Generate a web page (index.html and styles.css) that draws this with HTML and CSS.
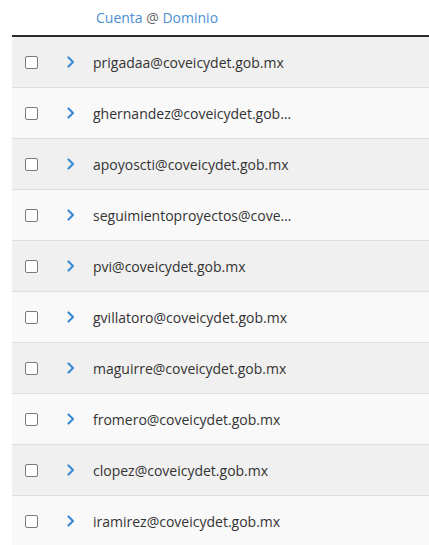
FILE: index.html
```html
<!DOCTYPE html>
<html lang="es">
  <head>
    <meta charset="UTF-8" />
    <meta name="viewport" content="width=device-width, initial-scale=1.0" />
    <title>Cuentas</title>
    <link rel="stylesheet" href="styles.css">
  </head>
  <body>
    <div class="accounts">
      <div class="accounts-head">
        <span class="head-check"></span>
        <span class="head-toggle"></span>
        <span class="head-title"><a href="#">Cuenta</a> @ <a href="#">Dominio</a></span>
      </div>
      <div class="account-row">
        <span class="check"></span>
        <svg class="chevron" viewBox="0 0 8 12"><path d="M1.5 1.5 L6 6 L1.5 10.5" /></svg>
        <span class="email">prigadaa@coveicydet.gob.mx</span>
      </div>
      <div class="account-row">
        <span class="check"></span>
        <svg class="chevron" viewBox="0 0 8 12"><path d="M1.5 1.5 L6 6 L1.5 10.5" /></svg>
        <span class="email">ghernandez@coveicydet.gob.mx</span>
      </div>
      <div class="account-row">
        <span class="check"></span>
        <svg class="chevron" viewBox="0 0 8 12"><path d="M1.5 1.5 L6 6 L1.5 10.5" /></svg>
        <span class="email">apoyoscti@coveicydet.gob.mx</span>
      </div>
      <div class="account-row">
        <span class="check"></span>
        <svg class="chevron" viewBox="0 0 8 12"><path d="M1.5 1.5 L6 6 L1.5 10.5" /></svg>
        <span class="email">seguimientoproyectos@coveicydet.gob.mx</span>
      </div>
      <div class="account-row">
        <span class="check"></span>
        <svg class="chevron" viewBox="0 0 8 12"><path d="M1.5 1.5 L6 6 L1.5 10.5" /></svg>
        <span class="email">pvi@coveicydet.gob.mx</span>
      </div>
      <div class="account-row">
        <span class="check"></span>
        <svg class="chevron" viewBox="0 0 8 12"><path d="M1.5 1.5 L6 6 L1.5 10.5" /></svg>
        <span class="email">gvillatoro@coveicydet.gob.mx</span>
      </div>
      <div class="account-row">
        <span class="check"></span>
        <svg class="chevron" viewBox="0 0 8 12"><path d="M1.5 1.5 L6 6 L1.5 10.5" /></svg>
        <span class="email">maguirre@coveicydet.gob.mx</span>
      </div>
      <div class="account-row">
        <span class="check"></span>
        <svg class="chevron" viewBox="0 0 8 12"><path d="M1.5 1.5 L6 6 L1.5 10.5" /></svg>
        <span class="email">fromero@coveicydet.gob.mx</span>
      </div>
      <div class="account-row">
        <span class="check"></span>
        <svg class="chevron" viewBox="0 0 8 12"><path d="M1.5 1.5 L6 6 L1.5 10.5" /></svg>
        <span class="email">clopez@coveicydet.gob.mx</span>
      </div>
      <div class="account-row">
        <span class="check"></span>
        <svg class="chevron" viewBox="0 0 8 12"><path d="M1.5 1.5 L6 6 L1.5 10.5" /></svg>
        <span class="email">iramirez@coveicydet.gob.mx</span>
      </div>
    </div>
  </body>
</html>
```

FILE: styles.css
```css
body {
  margin: 0;
  padding: 0;
  background-color: #fff;
  font-family: "Open Sans", sans-serif;
  color: #333;
  overflow: hidden;
}
.accounts {
  margin-left: 12px;
}
.accounts-head {
  display: flex;
  align-items: center;
  height: 34px;
  padding-bottom: 1px;
  border-bottom: 2px solid #2b2b2b;
  font-size: 14px;
  color: #666;
}
.head-check {
  width: 54px;
}
.head-toggle {
  width: 30px;
}
.head-title a {
  color: #4a8fd4;
  text-decoration: none;
}
.account-row {
  display: flex;
  align-items: center;
  height: 50px;
  border-bottom: 1px solid #dedede;
  background-color: #f9f9f9;
  font-size: 14px;
}
.account-row:nth-child(even) {
  background-color: #f0f0f0;
}
.check {
  width: 11px;
  height: 11px;
  margin-left: 13px;
  border: 1px solid #7a7a7a;
  border-radius: 2px;
  background-color: #fff;
}
.chevron {
  width: 8px;
  height: 12px;
  margin-left: 29px;
  fill: none;
  stroke: #3d8bd3;
  stroke-width: 2.2;
  stroke-linecap: round;
  stroke-linejoin: round;
}
.email {
  margin-left: 18px;
  max-width: 200px;
  white-space: nowrap;
  overflow: hidden;
  text-overflow: ellipsis;
}
```
